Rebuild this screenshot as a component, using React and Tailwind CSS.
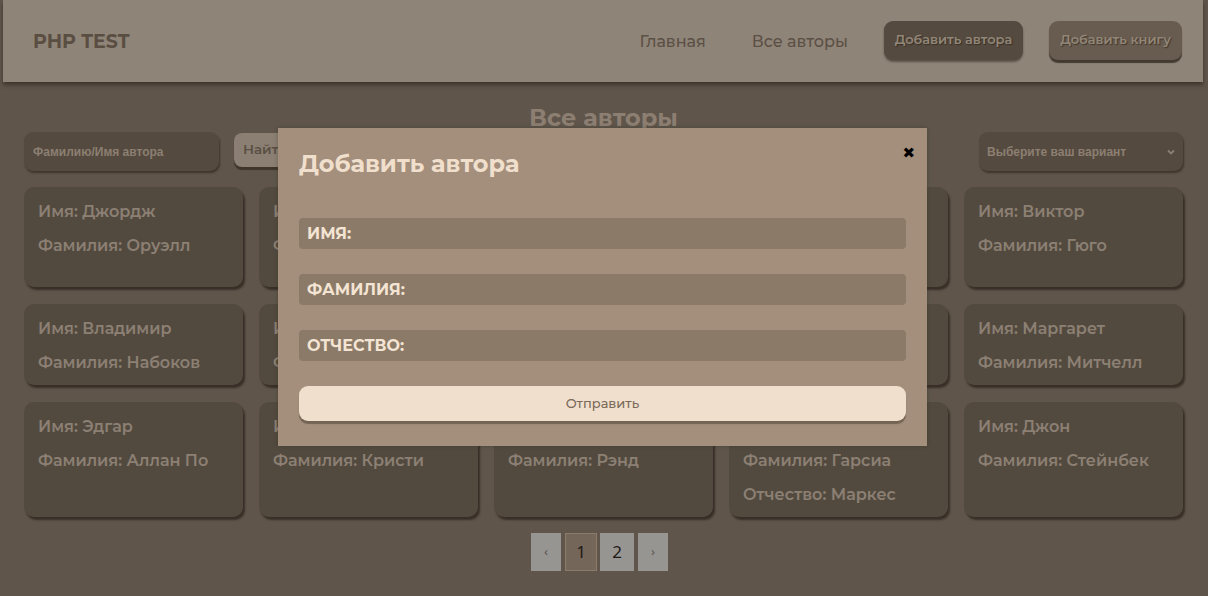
import React from "react";

const authors = [
  { first: "Джордж", last: "Оруэлл" },
  { first: "Лев", last: "Толстой" },
  { first: "Антуан", last: "де Сент-Экзюпери" },
  { first: "Фёдор", last: "Достоевский" },
  { first: "Виктор", last: "Гюго" },
  { first: "Владимир", last: "Набоков" },
  { first: "Михаил", last: "Булгаков" },
  { first: "Эрих", last: "Ремарк" },
  { first: "Рэй", last: "Брэдбери" },
  { first: "Маргарет", last: "Митчелл" },
  { first: "Эдгар", last: "Аллан По" },
  { first: "Агата", last: "Кристи" },
  { first: "Айн", last: "Рэнд" },
  { first: "Габриэль", last: "Гарсиа", middle: "Маркес" },
  { first: "Джон", last: "Стейнбек" },
];

function AuthorCard({ a }) {
  return (
    <div className="bg-[#534a3f] rounded-[10px] px-[14px] pt-[15px] pb-[13px] flex flex-col gap-[15px] shadow-[2px_3px_2px_rgba(40,32,24,0.7)] text-[#8c8074] text-[16px] font-semibold leading-[19px]">
      <p>Имя: {a.first}</p>
      <p>Фамилия: {a.last}</p>
      {a.middle && <p>Отчество: {a.middle}</p>}
    </div>
  );
}

export default function App() {
  const font = "font-['Montserrat','Open_Sans',sans-serif]";
  return (
    <div className={`relative min-h-[596px] bg-[#5f554b] ${font} overflow-hidden`}>
      <header className="mx-[3px] mr-[5px] h-[82px] bg-[#8f8478] shadow-[0_3px_4px_rgba(40,32,24,0.6)] flex items-center pl-[30px] pr-[21px]">
        <div className="text-[19px] font-bold text-[#5a4e42] mt-[2px]">PHP TEST</div>
        <nav className="ml-auto flex items-center">
          <a className="text-[16px] text-[#5b5045] font-medium mr-[46px] mt-[2px]">Главная</a>
          <a className="text-[16px] text-[#5b5045] font-medium mr-[36px] mt-[2px]">Все авторы</a>
          <button className="h-[39px] w-[139px] rounded-[9px] bg-[#544a3f] text-[#928678] text-[13px] font-semibold [text-shadow:1px_1px_1px_rgba(40,32,24,0.6)] shadow-[0_2px_2px_rgba(40,32,24,0.5)] mb-[2px]">
            Добавить автора
          </button>
          <button className="ml-[26px] h-[39px] w-[133px] rounded-[9px] bg-[#685c50] text-[#928678] text-[13px] font-semibold [text-shadow:1px_1px_1px_rgba(40,32,24,0.6)] shadow-[0_3px_1px_rgba(60,50,40,0.9)] mb-[2px]">
            Добавить книгу
          </button>
        </nav>
      </header>

      <main className="px-[24px] pr-[25px]">
        <h1 className="text-center text-[24px] font-bold text-[#8c7f72] mt-[22px] leading-[28px]">Все авторы</h1>
        <div className="flex items-center mt-[0px] mb-[16px]">
          <div className="w-[195px] h-[39px] rounded-[9px] bg-[#544a3f] shadow-[1px_2px_2px_rgba(40,32,24,0.6)] flex items-center px-[9px] text-[12px] font-bold text-[#8c7f72] font-['Liberation_Sans',sans-serif]">
            Фамилию/Имя автора
          </div>
          <button className="ml-[15px] mb-[4px] w-[80px] h-[34px] rounded-[8px] bg-[#8a7f72] text-[#5a4f44] text-[13.5px] font-semibold text-left pl-[9px] shadow-[0_3px_1px_rgba(60,50,40,0.9)]">
            Найти
          </button>
          <div className="ml-auto w-[204px] h-[39px] rounded-[9px] bg-[#544a3f] shadow-[1px_2px_2px_rgba(40,32,24,0.6)] flex items-center justify-between pl-[8px] pr-[7px] text-[12px] font-bold text-[#8c7f72] font-['Liberation_Sans',sans-serif]">
            <span>Выберите ваш вариант</span>
            <svg width="10" height="10" viewBox="0 0 10 10" fill="none" stroke="#8c7f72" strokeWidth="1.8">
              <path d="M2 3.5l3 3 3-3" />
            </svg>
          </div>
        </div>

        <div className="grid grid-cols-5 gap-x-[16px] gap-y-[17px]">
          {authors.map((a, i) => (
            <AuthorCard key={i} a={a} />
          ))}
        </div>

        <div className="flex justify-center mt-[16px] ml-[-8px] text-[17px] font-['Noto_Sans',sans-serif]">
          <button className="w-[30px] h-[38px] bg-[#979592] text-[#5a5550] text-[13px]">‹</button>
          <button className="ml-[4px] w-[32px] h-[38px] bg-[#746659] border border-[#8b7b6b] text-[#1e1a16]">1</button>
          <button className="ml-[3px] w-[34px] h-[38px] bg-[#979592] text-[#1e1a16]">2</button>
          <button className="ml-[4px] w-[30px] h-[38px] bg-[#979592] text-[#5a5550] text-[13px]">›</button>
        </div>
      </main>

      <div className="absolute left-[278px] top-[128px] w-[649px] h-[318px] bg-[#a38f7c] px-[21px] pt-[20px] shadow-[0_0_4px_rgba(40,32,24,0.3)]">
        <button className="absolute right-[12px] top-[18px] text-[15px] font-bold text-black font-['DejaVu_Sans',sans-serif] leading-none">✖</button>
        <h2 className="text-[24px] font-bold text-[#f0dfcc] leading-[32px]">Добавить автора</h2>
        <form className="mt-[38px] flex flex-col">
          {["ИМЯ:", "ФАМИЛИЯ:", "ОТЧЕСТВО:"].map((l) => (
            <div key={l} className="h-[31px] mb-[25px] rounded-[4px] bg-[#8b7a68] flex items-center px-[8px] text-[16px] font-bold text-[#f3e4d3]">
              {l}
            </div>
          ))}
          <button type="button" className="h-[35px] rounded-[9px] bg-[#f0dfcc] text-[#7a6a5a] text-[13px] font-medium shadow-[0_3px_1px_rgba(110,95,80,0.9)]">
            Отправить
          </button>
        </form>
      </div>
    </div>
  );
}
